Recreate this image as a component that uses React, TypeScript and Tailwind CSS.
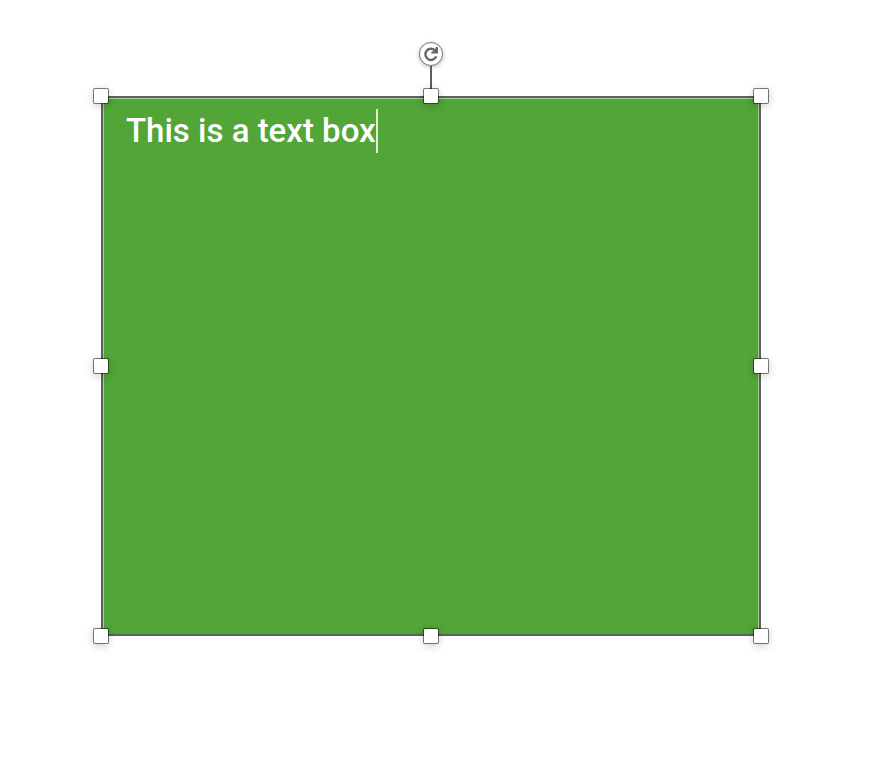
import { useState } from 'react'
import clsx from 'clsx'

const handles = [
  { id: 'top left', place: 'left-0 top-0 cursor-nwse-resize' },
  { id: 'top', place: 'left-1/2 top-0 cursor-ns-resize' },
  { id: 'top right', place: 'left-full top-0 cursor-nesw-resize' },
  { id: 'left', place: 'left-0 top-1/2 cursor-ew-resize' },
  { id: 'right', place: 'left-full top-1/2 cursor-ew-resize' },
  { id: 'bottom left', place: 'left-0 top-full cursor-nesw-resize' },
  { id: 'bottom', place: 'left-1/2 top-full cursor-ns-resize' },
  { id: 'bottom right', place: 'left-full top-full cursor-nwse-resize' },
]

function RotateHandle() {
  return (
    <div className="absolute bottom-full left-1/2 flex -translate-x-1/2 flex-col items-center">
      <button
        type="button"
        aria-label="Rotate"
        className="flex size-6 items-center justify-center rounded-full border border-[#777777] bg-white shadow-[0_1px_4px_rgba(0,0,0,0.3)]"
      >
        <svg viewBox="0 0 16 16" className="size-4" fill="none" aria-hidden="true">
          <path d="M11.8 4.2A5.6 5.6 0 1 0 13.2 10.4" stroke="#666666" strokeWidth="2.4" />
          <path d="M15 1V7.6H8.2V6L11.4 4.4L13.2 1Z" fill="#666666" />
        </svg>
      </button>
      <div className="h-[30px] w-0.5 bg-[#5e5e5e]" />
    </div>
  )
}

export default function App() {
  const [text, setText] = useState('This is a text box')

  return (
    <main className="min-h-screen bg-white pt-24 pr-29 pb-24 pl-[101px]">
      <div className="relative aspect-11/9">
        {/* Shape */}
        <div className="h-full border-2 border-[#606060] bg-[#52a537]">
          <div className="flex h-full items-start border border-b-0 border-[#a5cf97] px-[22px] pt-[10px]">
            <input
              type="text"
              aria-label="Text box"
              value={text}
              onChange={(e) => setText(e.target.value)}
              className="field-sizing-content h-11 bg-transparent font-['Roboto',sans-serif] text-[33px] font-medium text-white caret-transparent outline-none"
            />
            <span className="h-11 w-0.5 bg-[#dceed7]" />
          </div>
        </div>

        <RotateHandle />

        {/* Resize handles */}
        {handles.map((handle) => (
          <button
            key={handle.id}
            type="button"
            aria-label={`Resize ${handle.id}`}
            className={clsx(
              'absolute size-4 -translate-1/2 rounded-[2px] border border-black/50 bg-white bg-clip-padding shadow-[0_2px_8px_rgba(0,0,0,0.2)]',
              handle.place,
            )}
          />
        ))}
      </div>
    </main>
  )
}
